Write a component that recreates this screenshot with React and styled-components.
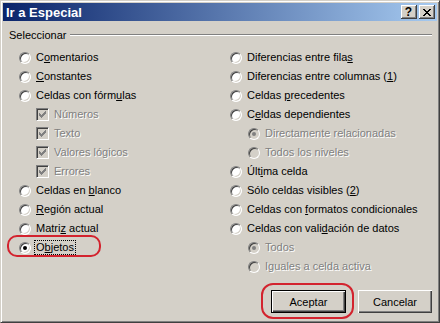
import React from "react";
import styled, { createGlobalStyle, css } from "styled-components";

const Global = createGlobalStyle`
  html, body { margin: 0; padding: 0; background: #d4d0c8; }
  body { font-family: "Liberation Sans", Arial, sans-serif; font-size: 11px; color: #000; }
`;

const Window = styled.div`
  width: 440px;
  height: 323px;
  box-sizing: border-box;
  background: #d4d0c8;
  border: 1px solid;
  border-color: #d4d0c8 #404040 #404040 #d4d0c8;
  box-shadow: inset 1px 1px #fff, inset -1px -1px #808080;
  padding: 2px;
  display: flex;
  flex-direction: column;
`;

const TitleBar = styled.div`
  height: 18px;
  display: flex;
  align-items: center;
  background: linear-gradient(to right, #0a246a, #a6caf0);
  padding: 0 2px 0 2px;
  gap: 2px;
`;

const Title = styled.div`
  flex: 1;
  color: #fff;
  font-weight: bold;
  font-size: 13px;
  padding-left: 1px;
`;

const CaptionButton = styled.div`
  width: 16px;
  height: 14px;
  box-sizing: border-box;
  background: #d4d0c8;
  box-shadow: inset -1px -1px #404040, inset 1px 1px #fff, inset -2px -2px #808080;
  display: flex;
  align-items: center;
  justify-content: center;
  font-weight: bold;
  font-size: 12px;
  line-height: 1;
  padding-right: 1px;
`;

const Body = styled.div`
  display: flex;
  flex-direction: column;
  padding: 7px 0 0 0;
`;

const GroupHeader = styled.div`
  height: 14px;
  display: flex;
  align-items: center;
  padding-left: 6px;
  padding-right: 5px;
`;

const GroupLabel = styled.span`
  padding-right: 4px;
`;

const GroupLine = styled.div`
  flex: 1;
  height: 0;
  border-top: 1px solid #808080;
  border-bottom: 1px solid #fff;
`;

const Columns = styled.div`
  display: grid;
  grid-template-columns: 211px 1fr;
  padding-left: 16px;
  margin-top: 6px;
`;

const Column = styled.div`
  display: flex;
  flex-direction: column;
`;

const Row = styled.div`
  position: relative;
  height: 19px;
  display: flex;
  align-items: center;
  padding-left: ${(p) => p.$indent || 0}px;
  gap: 4px;
  color: ${(p) => (p.$disabled ? "#808080" : "#000")};
  text-shadow: ${(p) => (p.$disabled ? "1px 1px 0 #fff" : "none")};
  white-space: nowrap;
`;

const RadioCircle = styled.span`
  width: 12px;
  height: 12px;
  box-sizing: border-box;
  border-radius: 50%;
  border: 1px solid;
  border-color: #808080 #fff #fff #808080;
  box-shadow: inset 1px 1px #404040, inset -1px -1px #d4d0c8;
  background: ${(p) => (p.$disabled ? "#d4d0c8" : "#fff")};
  display: flex;
  align-items: center;
  justify-content: center;
  flex: none;
`;

const Dot = styled.span`
  width: 4px;
  height: 4px;
  border-radius: 50%;
  background: ${(p) => (p.$disabled ? "#808080" : "#000")};
`;

const CheckBox = styled.span`
  width: 13px;
  height: 13px;
  box-sizing: border-box;
  flex: none;
  border: 1px solid;
  border-color: #808080 #fff #fff #808080;
  box-shadow: inset 1px 1px #404040, inset -1px -1px #d4d0c8;
  background: #d4d0c8;
  display: flex;
  align-items: center;
  justify-content: center;
`;

const Label = styled.span`
  display: inline-block;
  line-height: 13px;
  padding: 0 1px;
  ${(p) =>
    p.$focus &&
    css`
      outline: 1px dotted #000;
      outline-offset: 0px;
    `}
`;

const U = styled.span`
  text-decoration: underline;
  text-shadow: inherit;
`;

const Highlight = styled.div`
  position: absolute;
  left: ${(p) => p.$l}px;
  top: ${(p) => p.$t}px;
  width: ${(p) => p.$w}px;
  height: ${(p) => p.$h}px;
  box-sizing: border-box;
  border: 2.5px solid #d3232e;
  border-radius: ${(p) => p.$r}px;
  pointer-events: none;
`;

const Footer = styled.div`
  display: flex;
  justify-content: flex-end;
  gap: 12px;
  padding-right: 5px;
  margin-top: 14px;
`;

const Button = styled.div`
  position: relative;
  width: ${(p) => p.$w}px;
  height: 23px;
  box-sizing: border-box;
  display: flex;
  align-items: center;
  justify-content: center;
  background: #d4d0c8;
  box-shadow: inset 1px 1px #fff, inset -1px -1px #404040, inset -2px -2px #808080;
  ${(p) =>
    p.$default &&
    css`
      border: 1px solid #000;
    `}
`;

function Check() {
  const cols = [2, 3, 4, 3, 2, 1, 0];
  const d = cols.map((y, x) => `M${x} ${y}h1v3h-1z`).join("");
  return (
    <svg width="7" height="7" viewBox="0 0 7 7" shapeRendering="crispEdges">
      <path d={d} fill="#808080" />
    </svg>
  );
}

function CloseGlyph() {
  const d =
    "M0 0h2v1h-2zM6 0h2v1h-2zM1 1h2v1h-2zM5 1h2v1h-2zM2 2h4v1h-4zM3 3h2v1h-2zM2 4h4v1h-4zM1 5h2v1h-2zM5 5h2v1h-2zM0 6h2v1h-2zM6 6h2v1h-2z";
  return (
    <svg width="8" height="7" viewBox="0 0 8 7" shapeRendering="crispEdges">
      <path d={d} fill="#000" />
    </svg>
  );
}

function Radio({ checked, disabled, indent, focus, children, mark }) {
  return (
    <Row $indent={indent} $disabled={disabled}>
      <RadioCircle $disabled={disabled}>{checked && <Dot $disabled={disabled} />}</RadioCircle>
      <Label $focus={focus}>{children}</Label>
      {mark}
    </Row>
  );
}

function Box({ children }) {
  return (
    <Row $indent={17} $disabled>
      <CheckBox>
        <Check />
      </CheckBox>
      <Label>{children}</Label>
    </Row>
  );
}

export default function App() {
  return (
    <>
      <Global />
      <Window>
        <TitleBar>
          <Title>Ir a Especial</Title>
          <CaptionButton>?</CaptionButton>
          <CaptionButton>
            <CloseGlyph />
          </CaptionButton>
        </TitleBar>
        <Body>
          <GroupHeader>
            <GroupLabel>Seleccionar</GroupLabel>
            <GroupLine />
          </GroupHeader>
          <Columns>
            <Column>
              <Radio>
                C<U>o</U>mentarios
              </Radio>
              <Radio>
                <U>C</U>onstantes
              </Radio>
              <Radio>
                Celdas con fórm<U>u</U>las
              </Radio>
              <Box>Números</Box>
              <Box>Texto</Box>
              <Box>Valores lógicos</Box>
              <Box>Errores</Box>
              <Radio>
                Celdas en <U>b</U>lanco
              </Radio>
              <Radio>
                <U>R</U>egión actual
              </Radio>
              <Radio>
                Matri<U>z</U> actual
              </Radio>
              <Radio checked focus mark={<Highlight $l={-12} $t={-3} $w={94} $h={22} $r={10} />}>
                O<U>b</U>jetos
              </Radio>
            </Column>
            <Column>
              <Radio>
                Diferencias entre fila<U>s</U>
              </Radio>
              <Radio>
                Diferencias entre columnas (<U>1</U>)
              </Radio>
              <Radio>
                Celdas <U>p</U>recedentes
              </Radio>
              <Radio>
                C<U>e</U>ldas dependientes
              </Radio>
              <Radio indent={18} checked disabled>
                Directamente relacionadas
              </Radio>
              <Radio indent={18} disabled>
                Todos los niveles
              </Radio>
              <Radio>
                Últ<U>i</U>ma celda
              </Radio>
              <Radio>
                Sólo celdas visibles (<U>2</U>)
              </Radio>
              <Radio>
                Celdas con <U>f</U>ormatos condicionales
              </Radio>
              <Radio>
                Celdas con vali<U>d</U>ación de datos
              </Radio>
              <Radio indent={18} checked disabled>
                Todos
              </Radio>
              <Radio indent={18} disabled>
                Iguales a celda activa
              </Radio>
            </Column>
          </Columns>
          <Footer>
            <Button $w={75} $default>
              Aceptar
              <Highlight $l={-11} $t={-8} $w={93} $h={36} $r={12} />
            </Button>
            <Button $w={74}>Cancelar</Button>
          </Footer>
        </Body>
      </Window>
    </>
  );
}
